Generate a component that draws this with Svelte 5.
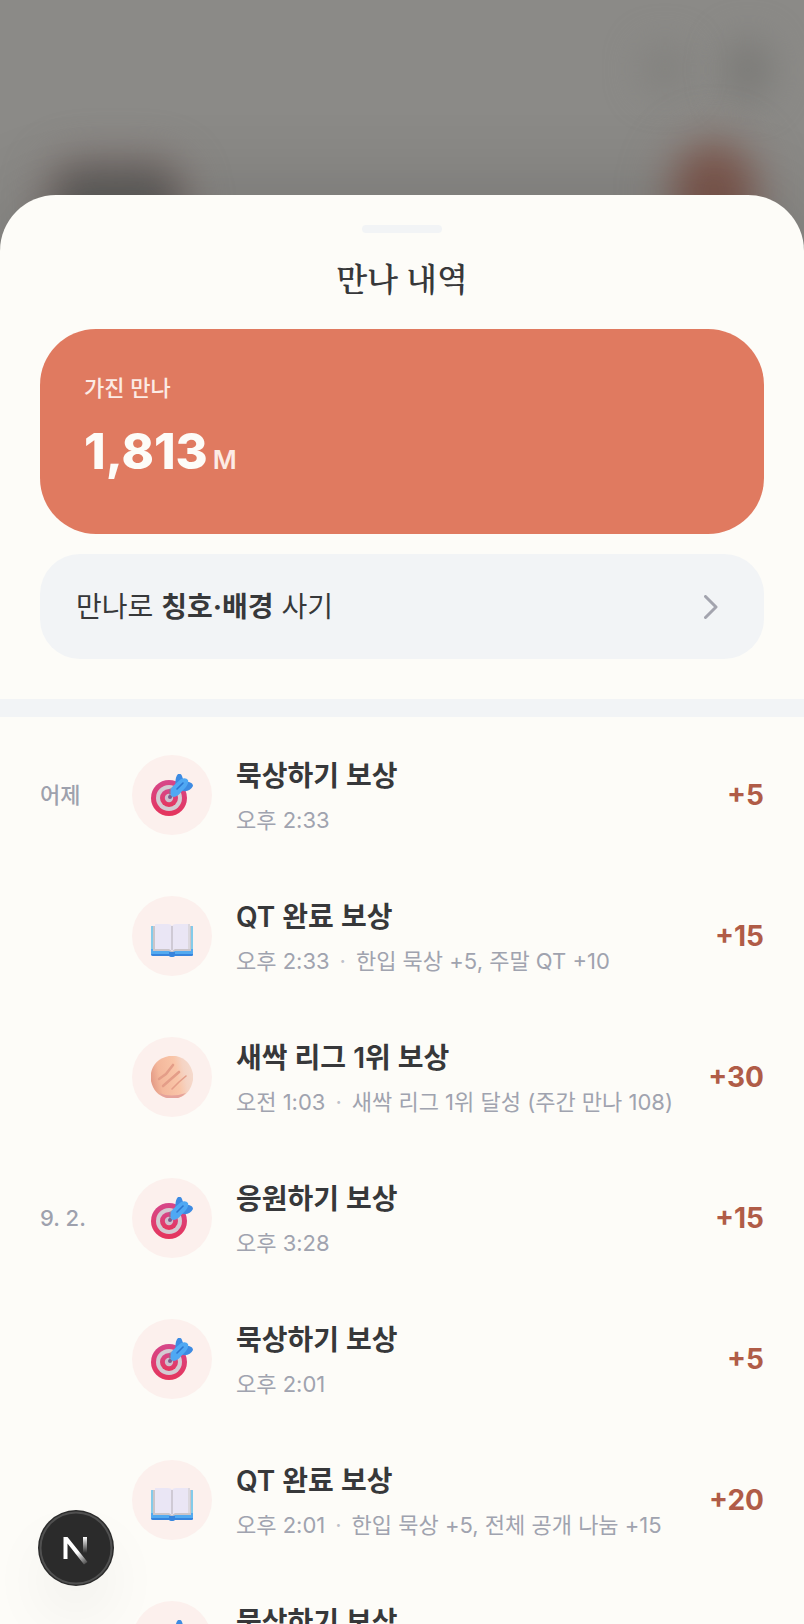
<script>
  const groups = [
    {
      date: '어제',
      items: [
        { icon: 'target', title: '묵상하기 보상', time: '오후 2:33', note: '', amount: 5 },
        { icon: 'book', title: 'QT 완료 보상', time: '오후 2:33', note: '한입 묵상 +5, 주말 QT +10', amount: 15 },
        { icon: 'manna', title: '새싹 리그 1위 보상', time: '오전 1:03', note: '새싹 리그 1위 달성 (주간 만나 108)', amount: 30 }
      ]
    },
    {
      date: '9. 2.',
      items: [
        { icon: 'target', title: '응원하기 보상', time: '오후 3:28', note: '', amount: 15 },
        { icon: 'target', title: '묵상하기 보상', time: '오후 2:01', note: '', amount: 5 },
        { icon: 'book', title: 'QT 완료 보상', time: '오후 2:01', note: '한입 묵상 +5, 전체 공개 나눔 +15', amount: 20 },
        { icon: 'target', title: '묵상하기 보상', time: '', note: '', amount: null }
      ]
    }
  ];
  const rows = groups.flatMap((g) => g.items.map((item, i) => ({ ...item, date: i === 0 ? g.date : '' })));
</script>

<div class="screen">
  <div class="backdrop" aria-hidden="true">
    <span class="glow tool-a"></span>
    <span class="glow tool-b"></span>
    <span class="glow chip"></span>
    <span class="glow orb"></span>
  </div>

  <main class="sheet">
    <header class="top">
      <span class="handle"></span>
      <h1>만나 내역</h1>
      <section class="balance">
        <p class="label">가진 만나</p>
        <p class="value">1,813<span>M</span></p>
      </section>
      <button class="shop" type="button">
        <span>만나로 <b>칭호·배경</b> 사기</span>
        <svg width="14" height="24" viewBox="0 0 14 24" aria-hidden="true">
          <path d="M1.5 1.5 L12 12 L1.5 22.5" fill="none" stroke="#a3a4ae" stroke-width="3" stroke-linecap="round" stroke-linejoin="round" />
        </svg>
      </button>
    </header>

    <ul class="history">
      {#each rows as row}
        <li>
          <span class="date">{row.date}</span>
          <span class="icon">
            {#if row.icon === 'target'}
              <svg viewBox="0 0 42 42" aria-hidden="true">
                <defs>
                  <linearGradient id="ring" x1="0" y1="0" x2="0" y2="1">
                    <stop offset="0" stop-color="#d6478a" />
                    <stop offset="1" stop-color="#e5355c" />
                  </linearGradient>
                </defs>
                <circle cx="18" cy="24" r="18" fill="url(#ring)" />
                <circle cx="18" cy="24" r="13" fill="#d3cbd2" />
                <circle cx="18" cy="24" r="9" fill="url(#ring)" />
                <circle cx="18" cy="24" r="4.2" fill="#cdbfcd" />
                <path d="M18 15 Q21 13 23 13 L22 23 L18 24Z" fill="#8d7089" opacity="0.6" />
                <circle cx="19" cy="23" r="2" fill="#7d5a8c" />
                <path d="M24.5 11 Q24 3 27 0 Q30 -1 31 2 L33 8 L28 13Z" fill="#3d8be2" />
                <path d="M32 8 L38 8 Q42 9 42 12 Q39 18 32 17 L28 14Z" fill="#3d8be2" />
                <path d="M19.5 18 Q19 15 22 12 L30 5 Q35 3 37 6 Q38 9 35 13 L28 20.5 Q24 24 21 22.5 Q19 21 19.5 18Z" fill="#4fa8f3" />
                <path d="M26 15 L32 9" stroke="#2d75cf" stroke-width="1.6" stroke-linecap="round" />
              </svg>
            {:else if row.icon === 'book'}
              <svg viewBox="0 0 42 42" aria-hidden="true">
                <path d="M0 12 Q0 11 2 11 H40 Q42 11 42 12 V39 Q42 41 40 41 H24 Q21 43 18 41 H2 Q0 41 0 39Z" fill="#53aaf0" />
                <path d="M0 12 Q0 11 2 11 V34 H0Z M40 11 Q42 11 42 12 V34 H40Z" fill="#83cbea" />
                <path d="M0 39 H18 V37 H24 V39 H42 V40 Q42 41 40 41 H24 Q21 43 18 41 H2 Q0 41 0 39Z" fill="#3784dd" />
                <path d="M2 11 H40 V36 H24 Q21 38 18 36 H2Z" fill="#cbc5c9" />
                <path d="M4 9 H17 Q20 9 21 11 Q22 9 25 9 H38 V34 H24 L21 36 L18 34 H4Z" fill="#eae6f5" />
                <path d="M20 11 H22 V35 H20Z" fill="#cfcad5" />
                <path d="M37 9 H39 V34 H37Z" fill="#dcd8de" />
              </svg>
            {:else}
              <svg viewBox="0 0 42 42" aria-hidden="true">
                <defs>
                  <linearGradient id="dough" x1="0" y1="0.6" x2="1" y2="0.4">
                    <stop offset="0" stop-color="#e39a86" />
                    <stop offset="0.22" stop-color="#f4b79b" />
                    <stop offset="0.62" stop-color="#f9c5a8" />
                    <stop offset="0.8" stop-color="#f5d3c3" />
                    <stop offset="1" stop-color="#f5dacd" />
                  </linearGradient>
                </defs>
                <path d="M18 0 H25 Q39 3 42 18 V24 Q39 39 27 42 H16 Q3 39 0 25 V17 Q3 3 18 0Z" fill="url(#dough)" />
                <path d="M8 37 Q20 42 35 37 Q31 41 27 42 H16 Q11 41 8 37Z" fill="#e5a29b" />
                <g fill="none" stroke="#e49d88" stroke-width="2.6" stroke-linecap="round" stroke-linejoin="round">
                  <path d="M8 23 L15 18 L22 9" />
                  <path d="M12 30 L20 23 L28 16" />
                  <path d="M21 33 L28 26 L35 20" stroke-width="1.6" />
                </g>
              </svg>
            {/if}
          </span>
          <div class="text">
            <p class="title">{row.title}</p>
            <p class="sub">
              <span>{row.time}</span>{#if row.note}<span class="dot">·</span><span>{row.note}</span>{/if}
            </p>
          </div>
          {#if row.amount}<strong class="amount">+{row.amount}</strong>{/if}
        </li>
      {/each}
    </ul>
  </main>

  <button class="dev" type="button" aria-label="N">
    <svg width="76" height="76" viewBox="0 0 76 76" aria-hidden="true">
      <defs>
        <linearGradient id="diag" x1="40" y1="42" x2="49" y2="54" gradientUnits="userSpaceOnUse">
          <stop stop-color="#fff" />
          <stop offset="1" stop-color="#fff" stop-opacity="0.1" />
        </linearGradient>
        <linearGradient id="stem" x1="0" y1="27" x2="0" y2="43" gradientUnits="userSpaceOnUse">
          <stop stop-color="#fff" />
          <stop offset="1" stop-color="#fff" stop-opacity="0" />
        </linearGradient>
      </defs>
      <circle cx="38" cy="38" r="38" fill="#2b2b2b" />
      <circle cx="38" cy="38" r="35.5" fill="none" stroke="#505050" stroke-width="2" />
      <path d="M25.5 49 V27 H29.5 L49.5 52 L46 54.5 L29.5 33.5 V49Z" fill="url(#diag)" />
      <path d="M45 27 H49 V43 H45Z" fill="url(#stem)" />
    </svg>
  </button>
</div>

<style>
  :global(body) {
    margin: 0;
    background: #8b8a87;
  }
  p,
  h1,
  ul {
    margin: 0;
    padding: 0;
  }
  .screen {
    position: relative;
    display: flex;
    flex-direction: column;
    justify-content: flex-end;
    height: 100vh;
    overflow: hidden;
    color: #37383a;
    font-family: Inter, 'Noto Sans CJK KR', sans-serif;
  }
  .backdrop {
    position: absolute;
    inset: 0;
    background: #8b8a87;
  }
  .glow {
    position: absolute;
    border-radius: 50%;
    filter: blur(18px);
  }
  .tool-a {
    top: 44px;
    right: 116px;
    width: 46px;
    height: 50px;
    background: #82817e;
  }
  .tool-b {
    top: 38px;
    right: 32px;
    width: 48px;
    height: 64px;
    background: #7b7a77;
  }
  .chip {
    top: 168px;
    left: 56px;
    width: 120px;
    height: 80px;
    border-radius: 24px;
    background: #605f5d;
    box-shadow: 0 0 14px 12px #80706c;
  }
  .orb {
    top: 146px;
    right: 52px;
    width: 76px;
    height: 90px;
    background: #7d584e;
    box-shadow: 0 0 20px 12px #887771;
  }
  .sheet {
    position: relative;
    display: flex;
    flex-direction: column;
    height: 88vh;
    overflow: hidden;
    border-radius: 56px 56px 0 0;
    background: #fdfcf8;
    box-shadow: 0 -8px 80px rgba(0, 0, 0, 0.14);
  }
  .top {
    display: flex;
    flex-direction: column;
    flex-shrink: 0;
    padding: 30px 40px 40px;
    border-bottom: 18px solid #f2f4f6;
  }
  .handle {
    align-self: center;
    width: 80px;
    height: 8px;
    border-radius: 4px;
    background: #f2f4f6;
  }
  h1 {
    margin: 20px 0 28px;
    font: 600 32px/48px 'Noto Serif CJK KR', 'Noto Sans CJK KR', serif;
    text-align: center;
  }
  .balance {
    display: flex;
    flex-direction: column;
    gap: 10px;
    padding: 41px 44px 46px;
    border-radius: 56px;
    background: #e07a60;
    color: #fdfcf8;
  }
  .label {
    color: #fcebe5;
    font-size: 22px;
    font-weight: 500;
    line-height: 36px;
  }
  .value {
    display: flex;
    align-items: baseline;
    gap: 5px;
    font-size: 49px;
    font-weight: 800;
    line-height: 72px;
  }
  .value span {
    color: #fcebe5;
    font-size: 26px;
    font-weight: 600;
    line-height: 36px;
  }
  .shop {
    display: flex;
    align-items: center;
    justify-content: space-between;
    margin-top: 20px;
    padding: 32px 46px 31px 36px;
    border: 0;
    border-radius: 40px;
    background: #f2f4f6;
    color: inherit;
    font: inherit;
    font-size: 28px;
    line-height: 42px;
    text-align: left;
    cursor: pointer;
  }
  .history {
    display: flex;
    flex: 1;
    flex-direction: column;
    gap: 55px;
    min-height: 0;
    padding: 35px 40px 0;
    overflow: hidden;
    list-style: none;
  }
  li {
    display: grid;
    grid-template-columns: 68px 80px 1fr auto;
    column-gap: 24px;
    align-items: center;
    flex-shrink: 0;
    min-height: 86px;
  }
  .date {
    color: #9ea1ad;
    font-size: 22px;
    font-weight: 500;
    line-height: 36px;
    white-space: nowrap;
  }
  .icon {
    display: grid;
    place-items: center;
    width: 80px;
    height: 80px;
    border-radius: 50%;
    background: #fcf0ed;
  }
  .icon svg {
    width: 42px;
    height: 42px;
  }
  .text {
    display: flex;
    flex-direction: column;
    gap: 5px;
    min-width: 0;
    padding-top: 3px;
  }
  .title {
    font-size: 28px;
    font-weight: 600;
    line-height: 42px;
  }
  .sub {
    display: flex;
    gap: 10px;
    min-height: 36px;
    color: #a0a3af;
    font-size: 22px;
    line-height: 36px;
    white-space: nowrap;
  }
  .dot {
    color: #bfc1c9;
  }
  .amount {
    color: #b05c47;
    font-size: 28px;
    font-weight: 700;
    line-height: 42px;
  }
  .dev {
    position: absolute;
    bottom: 38px;
    left: 38px;
    width: 76px;
    height: 76px;
    padding: 0;
    border: 0;
    border-radius: 50%;
    background: none;
    box-shadow: 0 32px 64px -8px rgba(0, 0, 0, 0.08);
    cursor: pointer;
  }
  .dev svg {
    display: block;
  }
</style>
